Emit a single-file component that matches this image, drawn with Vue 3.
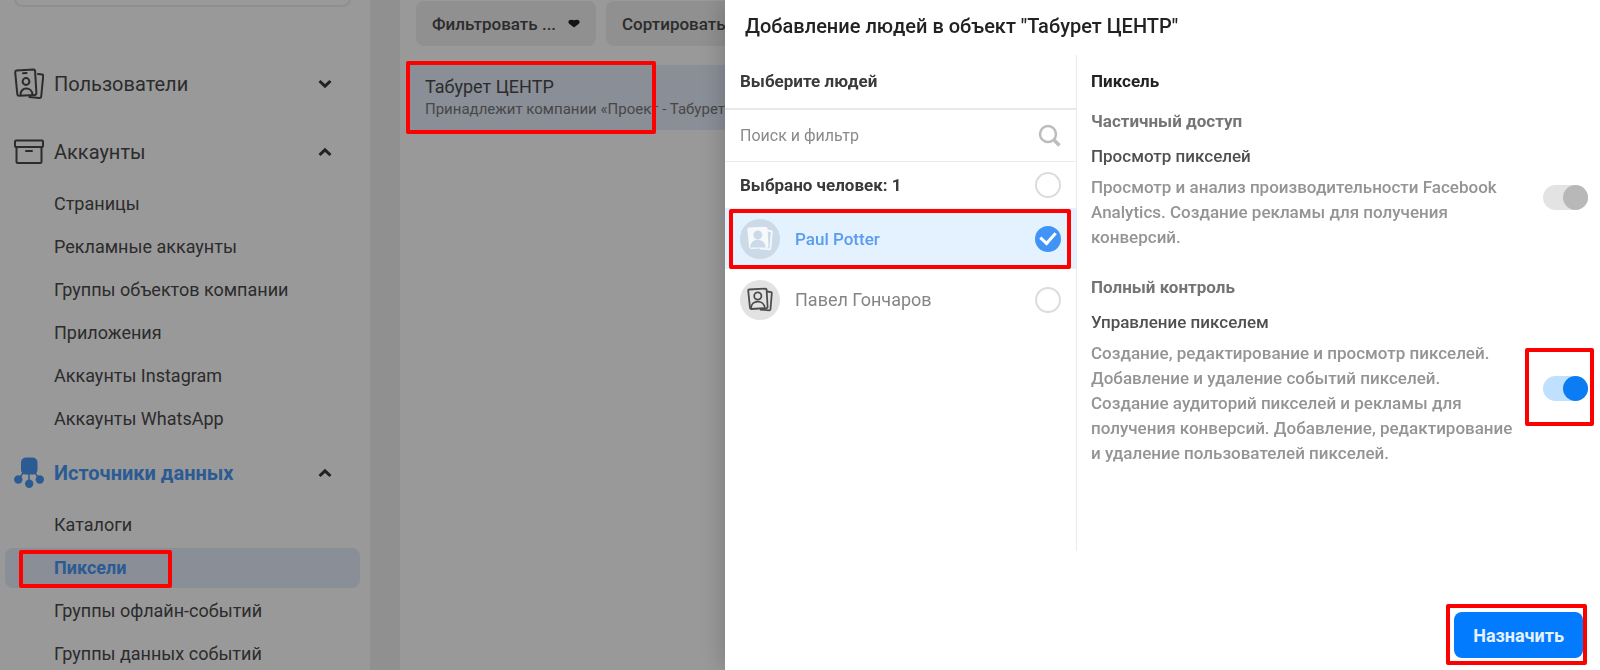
<script setup>
import { ref } from 'vue'

const accounts = [
  'Страницы',
  'Рекламные аккаунты',
  'Группы объектов компании',
  'Приложения',
  'Аккаунты Instagram',
  'Аккаунты WhatsApp',
]
const sources = ['Каталоги', 'Пиксели', 'Группы офлайн-событий', 'Группы данных событий']
const activeSource = 'Пиксели'

const all = ref(false)
const people = ref([
  { name: 'Paul Potter', checked: true },
  { name: 'Павел Гончаров', checked: false },
])

const permissions = ref([
  {
    level: 'Частичный доступ',
    name: 'Просмотр пикселей',
    text: 'Просмотр и анализ производительности Facebook Analytics. Создание рекламы для получения конверсий.',
    on: true,
    locked: true,
  },
  {
    level: 'Полный контроль',
    name: 'Управление пикселем',
    text: 'Создание, редактирование и просмотр пикселей. Добавление и удаление событий пикселей. Создание аудиторий пикселей и рекламы для получения конверсий. Добавление, редактирование и удаление пользователей пикселей.',
    on: true,
    locked: false,
  },
])
</script>

<template>
  <div class="app">
    <nav class="sidebar">
      <input class="side-search" type="text" aria-label="Поиск" />

      <section class="group closed">
        <button class="group-head" type="button">
          <svg class="group-icon" viewBox="0 0 30 32" fill="none" stroke="currentColor" stroke-width="2" stroke-linejoin="round" stroke-linecap="round">
            <path d="M2.5 2.6 19.5 1.6q1.5 0 1.6 1.5l1.3 22q0 1.8-1.6 1.9L5 27.8q-1.6 0-1.7-1.6L1.2 4.3q0-1.6 1.3-1.7z" />
            <path d="M24 6l4.2.6q1.2.2 1 1.4l-2 20.5q-.2 1.6-1.8 1.4l-10-1" />
            <path d="M9 5.2l3.6-.2" />
            <circle cx="12" cy="13.5" r="3.4" />
            <path d="M6.5 26.800c-.4-8 11.5-8.5 12 0" />
          </svg>
          <span class="group-title">Пользователи</span>
          <svg class="chevron" viewBox="0 0 14 10" fill="none" stroke="currentColor" stroke-width="3"><path d="M1.5 2 7 7.2 12.5 2" /></svg>
        </button>
      </section>

      <section class="group">
        <button class="group-head" type="button">
          <svg class="group-icon" viewBox="0 0 30 32" fill="none" stroke="currentColor" stroke-width="2" stroke-linejoin="round" stroke-linecap="round">
            <rect x="1" y="4.5" width="28" height="6.5" rx="1" />
            <path d="M2.5 11v14.500q0 1.500 1.500 1.500h22q1.500 0 1.500-1.500V11M12 15h6" />
          </svg>
          <span class="group-title">Аккаунты</span>
          <svg class="chevron" viewBox="0 0 14 10" fill="none" stroke="currentColor" stroke-width="3"><path d="M1.5 8 7 2.8 12.5 8" /></svg>
        </button>
        <ul class="links">
          <li v-for="item in accounts" :key="item"><a class="link" href="#">{{ item }}</a></li>
        </ul>
      </section>

      <section class="group">
        <button class="group-head current" type="button">
          <svg class="group-icon" viewBox="0 0 30 32" fill="currentColor">
            <path d="M11.5 .5h7.500q4 .5 4.500 4.500v8q-.5 4-4 4.500h-8.500q-3.500-.5-4-4.500V5q.5-4 4.500-4.500z" />
            <path d="M9 16 5 22M15 16v9M21 16l4.500 6" stroke="currentColor" stroke-width="1.500" />
            <circle cx="4.3" cy="22.500" r="4.200" />
            <circle cx="15.200" cy="26.800" r="4.200" />
            <circle cx="25.800" cy="22.500" r="4.200" />
          </svg>
          <span class="group-title">Источники данных</span>
          <svg class="chevron" viewBox="0 0 14 10" fill="none" stroke="currentColor" stroke-width="3"><path d="M1.5 8 7 2.8 12.5 8" /></svg>
        </button>
        <ul class="links">
          <li v-for="item in sources" :key="item">
            <a class="link" :class="{ active: item === activeSource }" href="#">
              {{ item }}
              <span v-if="item === activeSource" class="mark mark-link"></span>
            </a>
          </li>
        </ul>
      </section>
    </nav>

    <main class="content">
      <div class="filters">
        <button class="filter" type="button">
          Фильтровать ...
          <svg class="caret" viewBox="0 0 12 9" fill="currentColor"><path d="M1 1.5Q2.5 0 6 1.200 9.500 0 11 1.500 12.500 3 10.500 5L6 8.500 1.500 5Q-.5 3 1 1.500z" /></svg>
        </button>
        <button class="filter" type="button">
          Сортировать
          <svg class="caret" viewBox="0 0 12 9" fill="currentColor"><path d="M1 1.5Q2.5 0 6 1.200 9.500 0 11 1.500 12.500 3 10.500 5L6 8.500 1.500 5Q-.5 3 1 1.500z" /></svg>
        </button>
      </div>
      <article class="object">
        <div class="object-name">Табурет ЦЕНТР</div>
        <div class="object-owner">Принадлежит компании «Проект - Табурет</div>
        <span class="mark mark-object"></span>
      </article>
    </main>

    <div class="overlay">
      <section class="dialog" role="dialog" aria-labelledby="dialog-title">
        <h1 id="dialog-title" class="dialog-title">Добавление людей в объект "Табурет ЦЕНТР"</h1>

        <div class="dialog-body">
          <div class="people">
            <h2 class="people-title">Выберите людей</h2>
            <div class="people-search">
              <input type="text" placeholder="Поиск и фильтр" aria-label="Поиск и фильтр" />
              <svg class="lens" viewBox="0 0 24 24" fill="none" stroke="currentColor">
                <circle cx="10" cy="10" r="8" stroke-width="2.5" />
                <path d="M16 16l5.5 5.5" stroke-width="3.5" />
              </svg>
            </div>
            <label class="people-count">
              <span>Выбрано человек: 1</span>
              <input v-model="all" class="tick" type="checkbox" />
            </label>
            <label v-for="(p, i) in people" :key="p.name" class="person" :class="{ chosen: p.checked }">
              <span class="avatar">
                <svg viewBox="0 0 26 26" fill="none" stroke="currentColor" stroke-width="1.8" stroke-linejoin="round">
                  <path class="card-back" d="M20 4.500l4 .6q.9.200.8 1.100L23.500 22q-.2 1.500-1.500 1.300L13 22.500" />
                  <path class="card-front" d="M2.300 2.500l16.200-.9q1 0 1.100 1l1 17.400q0 1-1 1.100l-15.500.9q-1 0-1.100-1L1.200 3.600q0-1 1.100-1.100z" />
                  <circle class="card-face" cx="10.8" cy="9" r="3.6" />
                  <path class="card-face" d="M4 21.500c0-9 13-9.500 14 0" />
                </svg>
              </span>
              <span class="person-name">{{ p.name }}</span>
              <input v-model="p.checked" class="tick" type="checkbox" />
              <span v-if="i === 0" class="mark mark-person"></span>
            </label>
          </div>

          <div class="access">
            <h2 class="access-title">Пиксель</h2>
            <section v-for="(perm, i) in permissions" :key="perm.name" class="permission">
              <h3 class="level">{{ perm.level }}</h3>
              <label class="permission-row">
                <span class="permission-text">
                  <span class="permission-name">{{ perm.name }}</span>
                  <span class="permission-note">{{ perm.text }}</span>
                </span>
                <span class="toggle-cell">
                  <input v-model="perm.on" class="toggle" type="checkbox" role="switch" :disabled="perm.locked" />
                  <span v-if="i === 1" class="mark mark-toggle"></span>
                </span>
              </label>
            </section>
          </div>
        </div>

        <footer class="dialog-foot">
          <button class="assign" type="button">
            Назначить
            <span class="mark mark-assign"></span>
          </button>
        </footer>
      </section>
    </div>
  </div>
</template>

<style>
body {
  margin: 0;
  overflow: hidden;
}
</style>

<style scoped>
.app,
.app * {
  box-sizing: border-box;
}
.app {
  display: grid;
  grid-template-columns: 370px minmax(0, 1fr);
  column-gap: 30px;
  height: 100vh;
  overflow: hidden;
  background: #f1f1f1;
  color: #4a4a4c;
  font-family: Roboto, "Liberation Sans", sans-serif;
  font-size: 17px;
  font-weight: 500;
}
button,
input {
  font: inherit;
  color: inherit;
}
button {
  border: 0;
  cursor: pointer;
}
h1,
h2,
h3,
ul {
  margin: 0;
  padding: 0;
}

/* Sidebar */
.sidebar {
  padding: 0 10px 0 5px;
  background: #fff;
  overflow: hidden;
}
.side-search {
  display: block;
  width: calc(100% - 18px);
  height: 40px;
  margin: -33px 0 55px 9px;
  border: 2px solid #efefef;
  border-radius: 8px;
  background: #fff;
}
.group {
  margin-bottom: 12px;
}
.group.closed {
  margin-bottom: 24px;
}
.group-head {
  display: flex;
  align-items: center;
  width: 100%;
  height: 44px;
  padding: 0 28px 0 9px;
  background: none;
  font-size: 20px;
  font-weight: 400;
  text-align: left;
}
.group-icon {
  width: 30px;
  height: 32px;
}
.group-title {
  flex: 1;
  padding-left: 10px;
}
.current .group-icon,
.current .group-title {
  color: #4a98f6;
  font-weight: 700;
}
.chevron {
  width: 14px;
  height: 10px;
  color: #3a3a3a;
}
.links {
  display: grid;
  gap: 3px;
  margin-top: 10px;
  list-style: none;
}
.link {
  position: relative;
  display: block;
  padding-left: 49px;
  border-radius: 8px;
  color: inherit;
  font-size: 18px;
  font-weight: 400;
  line-height: 40px;
  text-decoration: none;
}
.link.active {
  background: #e6edfc;
  color: #4a98f6;
  font-weight: 700;
}

/* Object list */
.content {
  background: #fff;
  overflow: hidden;
}
.filters {
  display: flex;
  gap: 10px;
  padding: 1px 0 0 16px;
}
.filter {
  display: flex;
  flex: none;
  align-items: center;
  justify-content: space-between;
  width: 180px;
  height: 45px;
  padding: 0 16px;
  border-radius: 8px;
  background: #f0f0f0;
}
.caret {
  width: 12px;
  height: 9px;
  color: #222;
}
.object {
  position: relative;
  height: 65px;
  margin: 19px 0 0 10px;
  padding: 10px 15px;
  background: #e6edfc;
  white-space: nowrap;
}
.object-name {
  font-size: 18px;
  font-weight: 400;
  line-height: 24px;
}
.object-owner {
  color: #777;
  font-size: 15px;
  font-weight: 400;
  line-height: 20px;
}

/* Red outlines */
.mark {
  position: absolute;
  z-index: 3;
  border: 4px solid #f00;
  border-radius: 2px;
  pointer-events: none;
}
.mark-link {
  inset: 2px auto 0 14px;
  width: 153px;
}
.mark-object {
  inset: -4px auto -4px -4px;
  width: 250px;
}
.mark-person {
  inset: 1px 5px 0 4px;
}
.mark-toggle {
  inset: -28px -6px -25px -18px;
}
.mark-assign {
  inset: -8px -4px -7px -8px;
}

/* Dialog */
.overlay {
  position: fixed;
  z-index: 1;
  inset: 0;
  display: grid;
  grid-template-columns: minmax(0, 725fr) minmax(0, 875fr);
  background: rgba(0, 0, 0, 0.4);
}
.dialog {
  display: flex;
  flex-direction: column;
  grid-column: 2;
  background: #fff;
  box-shadow: -2px 0 24px rgba(0, 0, 0, 0.2);
}
.dialog-title {
  padding: 12px 20px 15px;
  color: #222;
  font-size: 20px;
  font-weight: 500;
  line-height: 28px;
}
.dialog-body {
  display: grid;
  flex: 1;
  grid-template-columns: 352px minmax(0, 1fr);
}
.people {
  border-right: 1px solid #eaeaea;
}
.people-title {
  padding-left: 15px;
  border-bottom: 2px solid #e8e8e8;
  color: #3a3a3a;
  font-size: 17px;
  font-weight: 700;
  line-height: 53px;
}
.people-search {
  display: flex;
  align-items: center;
  height: 52px;
  padding: 0 14px 0 15px;
  border-bottom: 1px solid #ebebeb;
}
.people-search input {
  flex: 1;
  min-width: 0;
  padding: 0;
  border: 0;
  outline: 0;
  background: none;
  font-size: 16px;
  font-weight: 400;
}
.people-search input::placeholder {
  color: #8a8a8a;
  opacity: 1;
}
.lens {
  width: 24px;
  height: 24px;
  color: #bdbdbd;
}
.people-count,
.person {
  position: relative;
  display: flex;
  align-items: center;
  padding: 0 15px;
}
.people-count {
  justify-content: space-between;
  height: 46px;
  color: #3a3a3a;
  font-weight: 700;
}
.tick {
  display: grid;
  place-items: center;
  appearance: none;
  width: 26px;
  height: 26px;
  margin: 0;
  border: 2px solid #dcdcdc;
  border-radius: 50%;
  background: #fff;
}
.tick:checked {
  border-color: #4094f7;
  background: #4094f7;
}
.tick:checked::after {
  content: "";
  width: 7px;
  height: 12px;
  margin-bottom: 4px;
  border: solid #fff;
  border-width: 0 3px 3px 0;
  transform: rotate(42deg);
}
.person {
  height: 61px;
  color: #858585;
  font-size: 18px;
  font-weight: 400;
}
.person.chosen {
  background: #e3f2fe;
  color: #5a9cf0;
  font-size: 17px;
  font-weight: 500;
}
.person-name {
  flex: 1;
  padding-left: 15px;
}
.avatar {
  display: grid;
  place-items: center;
  width: 40px;
  height: 40px;
  border-radius: 50%;
  background: #e2e2e2;
  color: #4d4d4d;
}
.avatar svg {
  width: 26px;
  height: 26px;
}
.chosen .avatar {
  background: #ccd9e7;
  color: #f6f9fc;
}
.chosen .card-front {
  fill: #f6f9fc;
}
.chosen .card-face {
  fill: #ccd9e7;
  stroke: #ccd9e7;
}

.access {
  padding: 14px 12px 0 14px;
  line-height: 24px;
}
.access-title {
  margin-bottom: 16px;
  color: #222;
  font-size: 17px;
  font-weight: 700;
}
.permission {
  margin-bottom: 25px;
}
.level {
  margin-bottom: 11px;
  color: #747474;
  font-size: 17px;
  font-weight: 700;
}
.permission-row {
  display: grid;
  grid-template-columns: minmax(0, 1fr) 45px;
  align-items: center;
  column-gap: 25px;
}
.permission-name,
.permission-note {
  display: block;
}
.permission-name {
  margin-bottom: 7px;
  color: #505050;
}
.permission-note {
  color: #949494;
  line-height: 25px;
}
.toggle-cell {
  position: relative;
  display: flex;
}
.toggle {
  display: flex;
  justify-content: flex-end;
  appearance: none;
  width: 45px;
  height: 25px;
  margin: 0;
  border-radius: 13px;
  background: #bfe0fe;
}
.toggle::after {
  content: "";
  width: 25px;
  height: 25px;
  border-radius: 50%;
  background: #0c7cf4;
}
.toggle:not(:checked) {
  justify-content: flex-start;
}
.toggle:disabled {
  background: #e3e3e3;
}
.toggle:disabled::after {
  background: #b8b8b8;
}

.dialog-foot {
  display: flex;
  justify-content: flex-end;
  padding: 61px 17px 12px;
}
.assign {
  position: relative;
  height: 46px;
  padding: 0 19px;
  border-radius: 8px;
  background: #027bfe;
  color: #e4f1ff;
  font-size: 18px;
  font-weight: 700;
}
</style>
